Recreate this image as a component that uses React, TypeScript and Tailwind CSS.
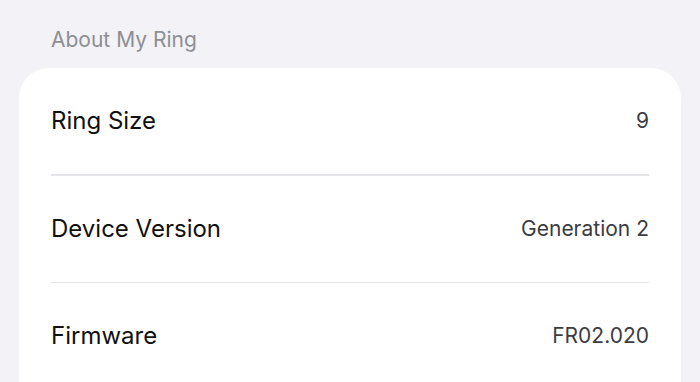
const rows = [
  { label: "Ring Size", value: "9" },
  { label: "Device Version", value: "Generation 2" },
  { label: "Firmware", value: "FR02.020" },
];

export default function App() {
  return (
    <div
      className="h-screen w-full overflow-hidden bg-[#f2f2f7] px-[19px] pt-[26px]"
      style={{ fontFamily: "Inter, 'Noto Sans', sans-serif" }}
    >
      <p className="px-8 text-[21px] leading-[28px] text-[#8e8e93]">About My Ring</p>
      <div className="mt-[14px] rounded-[30px] bg-white px-8 pb-10">
        {rows.map((r, i) => (
          <div key={r.label}>
            {i > 0 && <div className="h-[1.5px] bg-[#e5e5ea]" />}
            <div className="flex h-[106px] items-center justify-between">
              <span className="text-[24px] text-[#111111]">{r.label}</span>
              <span className="text-[21px] text-[#3c3c43]">{r.value}</span>
            </div>
          </div>
        ))}
      </div>
    </div>
  );
}
